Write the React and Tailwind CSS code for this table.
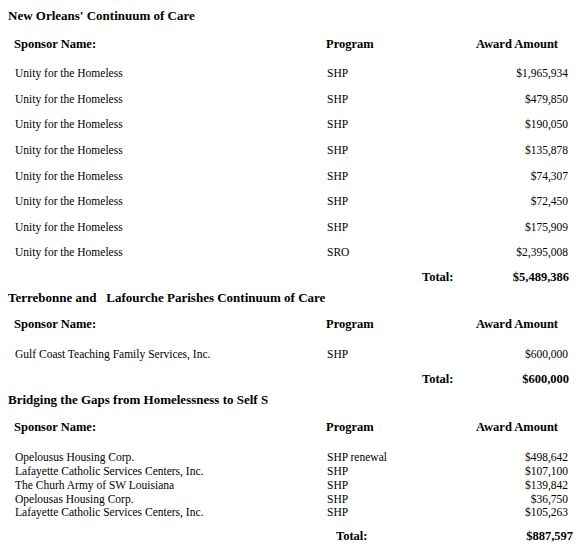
import React from 'react';

const sections = [
  {
    title: "New Orleans' Continuum of Care",
    dense: false,
    rows: [
      ['Unity for the Homeless', 'SHP', '$1,965,934'],
      ['Unity for the Homeless', 'SHP', '$479,850'],
      ['Unity for the Homeless', 'SHP', '$190,050'],
      ['Unity for the Homeless', 'SHP', '$135,878'],
      ['Unity for the Homeless', 'SHP', '$74,307'],
      ['Unity for the Homeless', 'SHP', '$72,450'],
      ['Unity for the Homeless', 'SHP', '$175,909'],
      ['Unity for the Homeless', 'SRO', '$2,395,008'],
    ],
    total: '$5,489,386',
  },
  {
    title: 'Terrebonne and \u00a0 Lafourche Parishes Continuum of Care',
    dense: false,
    rows: [['Gulf Coast Teaching Family Services, Inc.', 'SHP', '$600,000']],
    total: '$600,000',
  },
  {
    title: 'Bridging the Gaps from Homelessness to Self S',
    dense: true,
    rows: [
      ['Opelousus Housing Corp.', 'SHP renewal', '$498,642'],
      ['Lafayette Catholic Services Centers, Inc.', 'SHP', '$107,100'],
      ['The Churh Army of SW Louisiana', 'SHP', '$139,842'],
      ['Opelousas Housing Corp.', 'SHP', '$36,750'],
      ['Lafayette Catholic Services Centers, Inc.', 'SHP', '$105,263'],
    ],
    total: '$887,597',
  },
];

const cols = 'grid grid-cols-[313px_143px_98px] pl-[14px]';

const Section = ({ s, idx }) => (
  <div>
    <div className="h-[16px] flex items-center pl-[8px] text-[13px] font-bold whitespace-pre">{s.title}</div>

    {/* table header */}
    <div className={`${cols} ${idx === 1 ? 'mt-[7px]' : 'mt-[8px]'} h-[24px] items-center text-[12.5px] font-bold`}>
      <div>Sponsor Name:</div>
      <div className="-ml-[1px]">Program</div>
      <div className="text-center pr-[4px]">Award Amount</div>
    </div>

    <div className={s.dense ? 'mt-[10px]' : 'mt-[5px]'}>
      {s.rows.map((r, i) => (
        <div
          key={i}
          className={`${cols} ${s.dense ? 'h-[13.75px]' : 'h-[25.6px]'} items-center text-[11.5px]`}
        >
          <div className="pl-[1px] whitespace-nowrap">{r[0]}</div>
          <div>{r[1]}</div>
          <div className="text-right">{r[2]}</div>
        </div>
      ))}
    </div>

    {s.dense ? (
      <div className={`${cols} mt-[6px] h-[24px] items-center text-[12.5px] font-bold`}>
        <div />
        <div className="pl-[9px]">Total:</div>
        <div className="text-right -mr-[5px]">{s.total}</div>
      </div>
    ) : (
      <div className={`${cols} h-[24px] items-center text-[12.5px] font-bold`}>
        <div />
        <div className="pl-[95px]">Total:</div>
        <div className="text-right -mr-[1px]">{s.total}</div>
      </div>
    )}
  </div>
);

export default function App() {
  return (
    <div className="w-[576px] h-[558px] bg-white text-black pt-[8px] font-['Liberation_Serif','Times_New_Roman',serif] overflow-hidden">
      {sections.map((s, i) => (
        <Section key={i} s={s} idx={i} />
      ))}
    </div>
  );
}
